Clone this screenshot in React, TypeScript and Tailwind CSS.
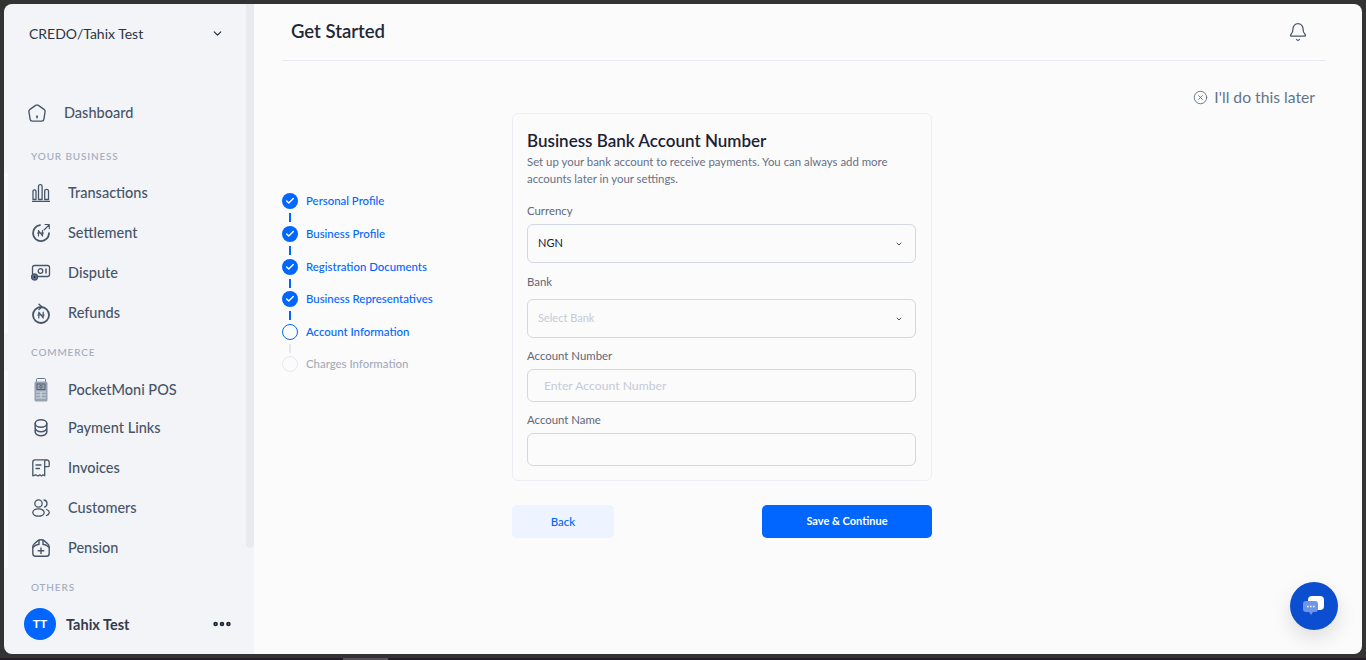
import { Bell, Check, ChevronDown, CircleX, Ellipsis } from "lucide-react";
import type { ReactNode } from "react";

const stroke = {
  fill: "none",
  stroke: "#475569",
  strokeWidth: 1.5,
  strokeLinecap: "round" as const,
  strokeLinejoin: "round" as const,
};

function HomeIcon() {
  return (
    <svg width="18" height="18" viewBox="0 0 20 20" {...stroke}>
      <path d="M8.500 1.500 1.800 6.300q-1 .8-.8 2l1.300 8.500q.3 2.200 2.500 2.200h10.400q2.200 0 2.500-2.200l1.300-8.500q.2-1.200-.8-2L11.500 1.500q-1.500-1-3 0Z" />
      <path d="M10 13.500v1.800" strokeWidth={1.800} />
    </svg>
  );
}

function BarsIcon() {
  return (
    <svg width="18" height="18" viewBox="0 0 18 18" {...stroke} strokeWidth={1.300}>
      <path d="M.5 17.500h17" />
      <path d="M1 15.500V7.500q0-1.700 1.500-1.700T4 7.500v8ZM6.500 15.500V2.500Q6.500.7 8.300.7t1.800 1.800v13ZM12.700 15.500V7q0-1.700 1.900-1.700T16.500 7v8.500Z" />
    </svg>
  );
}

function SettleIcon() {
  return (
    <svg width="20" height="20" viewBox="0 0 20 20" {...stroke} strokeWidth={1.800}>
      <path d="M9 2.200a8 8 0 1 0 9 8" />
      <path d="M13 7 18 2M14 1.500h4.300V5.800" strokeWidth={1.100} />
      <path d="M7.500 13V7.500l4 5.500V7.500M6.500 10h6" strokeWidth={1.200} />
    </svg>
  );
}

function DisputeIcon() {
  return (
    <svg width="20" height="18" viewBox="0 0 20 18" {...stroke} strokeWidth={1.300}>
      <path d="M1.500 10V3.500q0-2 2-2h13q2 0 2 2v7q0 2-2 2H7" />
      <circle cx="9.500" cy="7" r="2.300" />
      <path d="M15 5v4" strokeWidth={1.500} />
      <circle cx="3.500" cy="13" r="3" fill="#64748b" />
      <circle cx="3.500" cy="13" r="1" fill="#1e293b" stroke="none" />
    </svg>
  );
}

function RefundIcon() {
  return (
    <svg width="20" height="21" viewBox="0 0 20 21" {...stroke} strokeWidth={1.800}>
      <circle cx="10" cy="12" r="8" />
      <path d="M8 1.200 11 4 8 6.500" strokeWidth={1.400} />
      <path d="M7.800 15V9l4.400 6V9M6.800 12h6.400" strokeWidth={1.200} />
    </svg>
  );
}

function PosIcon() {
  return (
    <svg width="14" height="24" viewBox="0 0 14 24">
      <rect x="2.500" y=".5" width="9" height="4" rx="1" fill="none" stroke="#64748b" />
      <rect x="0.500" y="3.500" width="13" height="20" rx="1.500" fill="#98a2b3" />
      <rect x="3" y="6" width="8" height="5.500" fill="none" stroke="#475569" strokeWidth=".8" />
      <circle cx="7" cy="8.700" r="1.300" fill="none" stroke="#475569" strokeWidth=".8" />
      <path d="M2 14h10M2 17h10M2 20h10M7 14v6" stroke="#e2e8f0" strokeWidth=".8" />
    </svg>
  );
}

function CoinsIcon() {
  return (
    <svg width="14" height="18" viewBox="0 0 14 18" {...stroke}>
      <ellipse cx="7" cy="4.500" rx="5.800" ry="3.700" />
      <path d="M1.200 4.500v8.500c0 2 2.600 3.700 5.800 3.700s5.800-1.700 5.800-3.700V4.500M1.200 9c0 2 2.600 3.700 5.800 3.700s5.800-1.700 5.800-3.700" />
    </svg>
  );
}

function InvoiceIcon() {
  return (
    <svg width="18" height="18" viewBox="0 0 18 18" {...stroke} strokeWidth={1.300}>
      <path d="M3 .8h11.500q-1.800 0-1.800 2v14l-1.700-1-1.500 1.200-1.700-1.200-1.600 1.200L3.600 15.800l-2.800 1V3Q.8.800 3 .8Z" />
      <path d="M14.500.8q2.700 0 2.700 2.700v3.200q0 1-1 1h-3.500M4 6h5M4 9.500h3.500" />
    </svg>
  );
}

function UsersIcon() {
  return (
    <svg width="18" height="18" viewBox="0 0 18 18" {...stroke} strokeWidth={1.300}>
      <circle cx="6.500" cy="4.500" r="3.700" />
      <ellipse cx="6.500" cy="13.500" rx="5.700" ry="3.700" />
      <path d="M12 1q3 .4 3 3.500T12.500 8M14.500 10.500q2.800 1.200 2.800 3t-2.800 3" />
    </svg>
  );
}

function PensionIcon() {
  return (
    <svg width="18" height="18" viewBox="0 0 18 18" {...stroke} strokeWidth={1.400}>
      <path d="M.8 8q0-2 1.500-3.200L6 1.600q3-1.700 6 0l3.700 3.200Q17.200 6 17.200 8v6.500q0 2.800-2.800 2.800H3.600q-2.800 0-2.800-2.800Z" />
      <path d="M.8 8.500q3-3 5.200-3M17.200 8.500q-3-3-5.200-3M7 1v4.500M11 1v4.500M9 9v5.500M6.200 11.800h5.600" />
    </svg>
  );
}

function NavItem({ icon, label, height = "h-10" }: { icon: ReactNode; label: string; height?: string }) {
  return (
    <div className={`flex items-center ${height}`}>
      <div className="flex w-[60px] shrink-0 justify-center pl-[6px]">{icon}</div>
      <span className="text-[14.500px] font-medium text-[#475569]">{label}</span>
    </div>
  );
}

function SectionLabel({ children, className }: { children: string; className: string }) {
  return (
    <div className={`flex items-center pl-[27px] text-[10px] font-medium tracking-[0.85px] text-[#a3abbd] ${className}`}>
      {children}
    </div>
  );
}

function Sidebar() {
  return (
    <aside className="flex w-[250px] shrink-0 flex-col bg-[#f2f4f8]">
      <div className="flex h-[564px] shrink-0">
        <div className="min-w-0 flex-1">
          <div className="flex h-[60px] items-center justify-between pb-[2px] pl-[25px] pr-[22px]">
            <span className="text-[14px] text-[#2c3444]">CREDO/Tahix Test</span>
            <ChevronDown size={13} strokeWidth={2} className="text-[#1e293b]" />
          </div>
          <div className="mt-[29px] flex h-10 items-center">
            <div className="flex w-[60px] shrink-0 justify-center pb-[1px] pl-[6px]">
              <HomeIcon />
            </div>
            <span className="text-[14.500px] font-medium text-[#475569]">Dashboard</span>
          </div>
          <SectionLabel className="mt-[4px] h-[36px] pt-[2px]">YOUR BUSINESS</SectionLabel>
          <div className="border-l-4 border-[#f8f9fb]">
            <NavItem icon={<BarsIcon />} label="Transactions" />
            <NavItem icon={<SettleIcon />} label="Settlement" />
            <NavItem icon={<DisputeIcon />} label="Dispute" />
            <NavItem icon={<RefundIcon />} label="Refunds" />
          </div>
          <SectionLabel className="h-[38px]">COMMERCE</SectionLabel>
          <div className="border-l-4 border-[#f8f9fb]">
            <NavItem icon={<PosIcon />} label="PocketMoni POS" height="h-[38px]" />
            <NavItem icon={<CoinsIcon />} label="Payment Links" height="h-[38px]" />
            <NavItem icon={<InvoiceIcon />} label="Invoices" height="h-[41px]" />
            <NavItem icon={<UsersIcon />} label="Customers" />
            <NavItem icon={<PensionIcon />} label="Pension" />
          </div>
        </div>
        <div className="mb-[20px] w-[8px] rounded-b-[4px] bg-[#e8eaee]" />
      </div>
      <SectionLabel className="h-[38px]">OTHERS</SectionLabel>
      <div className="flex h-[36px] items-center pl-[20px] pr-[21px]">
        <div className="flex h-8 w-8 items-center justify-center rounded-full bg-[#0066ff] text-[12px] font-bold text-white">
          TT
        </div>
        <span className="ml-[10px] flex-1 pt-[1px] text-[14.500px] font-bold text-[#333b4a]">Tahix Test</span>
        <Ellipsis size={22} strokeWidth={3} className="text-[#1e293b]" />
      </div>
    </aside>
  );
}

const steps = [
  { label: "Personal Profile", state: "done", gap: "h-[17px]" },
  { label: "Business Profile", state: "done", gap: "h-[17px]" },
  { label: "Registration Documents", state: "done", gap: "h-[16px]" },
  { label: "Business Representatives", state: "done", gap: "h-[17px]" },
  { label: "Account Information", state: "active", gap: "h-[16px]" },
  { label: "Charges Information", state: "todo", gap: "" },
];

function Stepper() {
  return (
    <div className="mt-[80px] w-[230px] shrink-0">
      {steps.map((step, i) => (
        <div key={step.label}>
          <div className="flex h-4 items-center gap-2">
            {step.state === "done" && (
              <div className="flex h-4 w-4 items-center justify-center rounded-full bg-[#0066ff]">
                <Check size={10} strokeWidth={3.500} className="text-white" />
              </div>
            )}
            {step.state === "active" && <div className="h-4 w-4 rounded-full border border-[#0066ff]" />}
            {step.state === "todo" && <div className="h-4 w-4 rounded-full border border-[#e4e8f0]" />}
            <span
              className={`text-[11.400px] font-medium ${step.state === "todo" ? "text-[#a3abbd]" : "text-[#0066ff]"}`}
            >
              {step.label}
            </span>
          </div>
          {step.gap && (
            <div className={`flex items-center ${step.gap}`}>
              <div className={`ml-[7px] h-[9px] w-[2px] ${i === 4 ? "bg-[#e2e6ee]" : "bg-[#0066ff]"}`} />
            </div>
          )}
        </div>
      ))}
    </div>
  );
}

function FieldLabel({ children, className }: { children: string; className: string }) {
  return <div className={`flex items-center text-[11.400px] text-[#5f6878] ${className}`}>{children}</div>;
}

function SelectBox({ value, placeholder }: { value: string; placeholder?: boolean }) {
  return (
    <div className="flex h-[39px] items-center justify-between rounded-[6px] border border-[#d3d6e4] pl-[10px] pr-[12px]">
      <span className={placeholder ? "text-[11px] text-[#c6cad6]" : "text-[11px] text-[#1a1a33]"}>{value}</span>
      <ChevronDown size={8} strokeWidth={3} className="text-[#475569]" />
    </div>
  );
}

function Form() {
  return (
    <div className="w-[420px] shrink-0">
      <div className="rounded-[6px] border border-[#eceef3] pb-[14px] pl-[14px] pr-[15px] pt-[16px]">
        <h2 className="text-[17px] leading-[22px] font-semibold text-[#1a2233]">Business Bank Account Number</h2>
        <p className="mt-[1px] text-[11.400px] leading-[17px] text-[#667085]">
          Set up your bank account to receive payments. You can always add more accounts later in your settings.
        </p>
        <FieldLabel className="mt-[13px] h-[22px]">Currency</FieldLabel>
        <div className="mt-[2px]">
          <SelectBox value="NGN" />
        </div>
        <FieldLabel className="mt-[8px] h-[22px]">Bank</FieldLabel>
        <div className="mt-[6px]">
          <SelectBox value="Select Bank" placeholder />
        </div>
        <FieldLabel className="mt-[7px] h-[22px]">Account Number</FieldLabel>
        <input
          placeholder="Enter Account Number"
          className="mt-[2px] block h-[33px] w-full rounded-[6px] border border-[#d3d6e4] bg-transparent px-4 text-[12.200px] placeholder:text-[#c6cad6]"
        />
        <FieldLabel className="mt-[7px] h-[22px]">Account Name</FieldLabel>
        <input className="mt-[2px] block h-[33px] w-full rounded-[6px] border border-[#d3d6e4] bg-transparent px-4" />
      </div>
      <div className="mt-[24px] flex justify-between">
        <button className="h-[33px] w-[102px] rounded-[5px] bg-[#edf3ff] text-[11.500px] font-medium text-[#0066ff]">
          Back
        </button>
        <button className="h-[33px] w-[170px] rounded-[5px] bg-[#0066ff] text-[11px] font-bold text-white">
          Save &amp; Continue
        </button>
      </div>
    </div>
  );
}

function ChatBubble() {
  return (
    <div className="absolute bottom-[24px] right-[24px] flex h-12 w-12 items-center justify-center rounded-full bg-[#0b4fd0] shadow-[0_8px_20px_rgba(0,0,0,0.12)]">
      <svg width="24" height="22" viewBox="0 0 24 22">
        <path d="M10 1h8q4 0 4 4v6q0 4-4 4h-8q-4 0-4-4V5q0-4 4-4Z" fill="#fff" />
        <path d="M4 6h9q3 0 3 3v5q0 3-3 3h-2l-2 3-2-3H4q-3 0-3-3V9q0-3 3-3Z" fill="#6f94e6" />
        <path d="M5 11.500h1.500M8 11.500h1.500M11 11.500h1.500" stroke="#fff" strokeWidth="1.500" />
      </svg>
    </div>
  );
}

export default function App() {
  return (
    <div className="h-[660px] overflow-hidden bg-[#333333] pt-1 font-['Lato',sans-serif]">
      <div className="relative mx-1 flex h-[650px] overflow-hidden rounded-lg">
        <Sidebar />
        <main className="min-w-0 flex-1 bg-[#fbfbfc]">
          <header className="ml-[28px] mr-[36px] flex h-[57px] items-center justify-between border-b border-[#e9ebf0] pl-[9px] pr-[18px]">
            <h1 className="text-[18.500px] font-semibold text-[#1f2937]">Get Started</h1>
            <Bell size={20} strokeWidth={1.500} className="text-[#475569]" />
          </header>
          <div className="flex h-[52px] items-start justify-end pr-[47px] pt-[25px]">
            <div className="flex items-center gap-[6px] text-[15.700px] leading-[22px] text-[#64748b]">
              <CircleX size={15} strokeWidth={1.500} />
              I'll do this later
            </div>
          </div>
          <div className="ml-[28px] flex">
            <Stepper />
            <Form />
          </div>
        </main>
        <ChatBubble />
      </div>
      <div className="mt-[4px] h-[2px] bg-[#231d2e]">
        <div className="ml-[343px] h-[2px] w-[45px] bg-[#57505f]" />
      </div>
    </div>
  );
}
